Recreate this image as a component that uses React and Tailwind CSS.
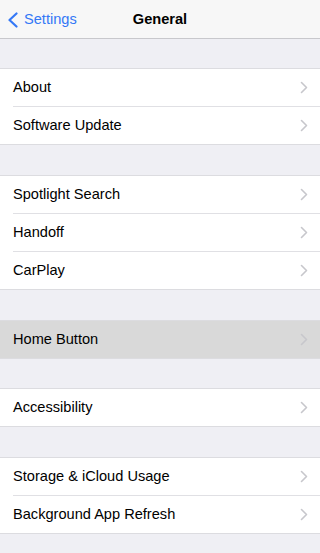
import React from "react";

const Chevron = () => (
  <svg width="8" height="13" viewBox="0 0 8 13" className="shrink-0">
    <path d="M1.5 1.5 L6.5 6.5 L1.5 11.5" fill="none" stroke="#c7c7cc" strokeWidth="1.6" strokeLinecap="round" strokeLinejoin="round" />
  </svg>
);

const Row = ({ label, last, selected }) => (
  <div className={selected ? "bg-[#d9d9d9]" : "bg-white"}>
    <div className="flex items-center h-[37px] pl-[13px] pr-[12px]">
      <span className="flex-1 text-[14.6px] text-black">{label}</span>
      <Chevron />
    </div>
    {!last && <div className="ml-[13px] h-px bg-[#e0e0e4]" />}
  </div>
);

const Group = ({ items, selected }) => (
  <div className="border-y border-[#dcdce0]">
    {items.map((it, i) => (
      <Row key={it} label={it} last={i === items.length - 1} selected={selected} />
    ))}
  </div>
);

export default function App() {
  return (
    <div className="w-[320px] h-[553px] overflow-hidden bg-[#efeff4]" style={{ fontFamily: '"Liberation Sans", Arial, sans-serif' }}>
      <div className="relative h-[39px] bg-[#f7f7f7] border-b border-[#c8c8cc] flex items-center pt-[2px]">
        <div className="flex items-center pl-[7px] text-[#3478f6] text-[14.6px]">
          <svg width="12" height="16" viewBox="0 0 12 16" className="mr-[5px]">
            <path d="M9.5 1.5 L2.5 8 L9.5 14.5" fill="none" stroke="#3478f6" strokeWidth="2.2" strokeLinecap="round" strokeLinejoin="round" />
          </svg>
          <span>Settings</span>
        </div>
        <div className="absolute inset-x-0 text-center text-[14.6px] font-semibold text-black pointer-events-none">General</div>
      </div>
      <div className="h-[29px]" />
      <Group items={["About", "Software Update"]} />
      <div className="h-[30px]" />
      <Group items={["Spotlight Search", "Handoff", "CarPlay"]} />
      <div className="h-[30px]" />
      <Group items={["Home Button"]} selected />
      <div className="h-[29px]" />
      <Group items={["Accessibility"]} />
      <div className="h-[30px]" />
      <Group items={["Storage & iCloud Usage", "Background App Refresh"]} />
    </div>
  );
}
